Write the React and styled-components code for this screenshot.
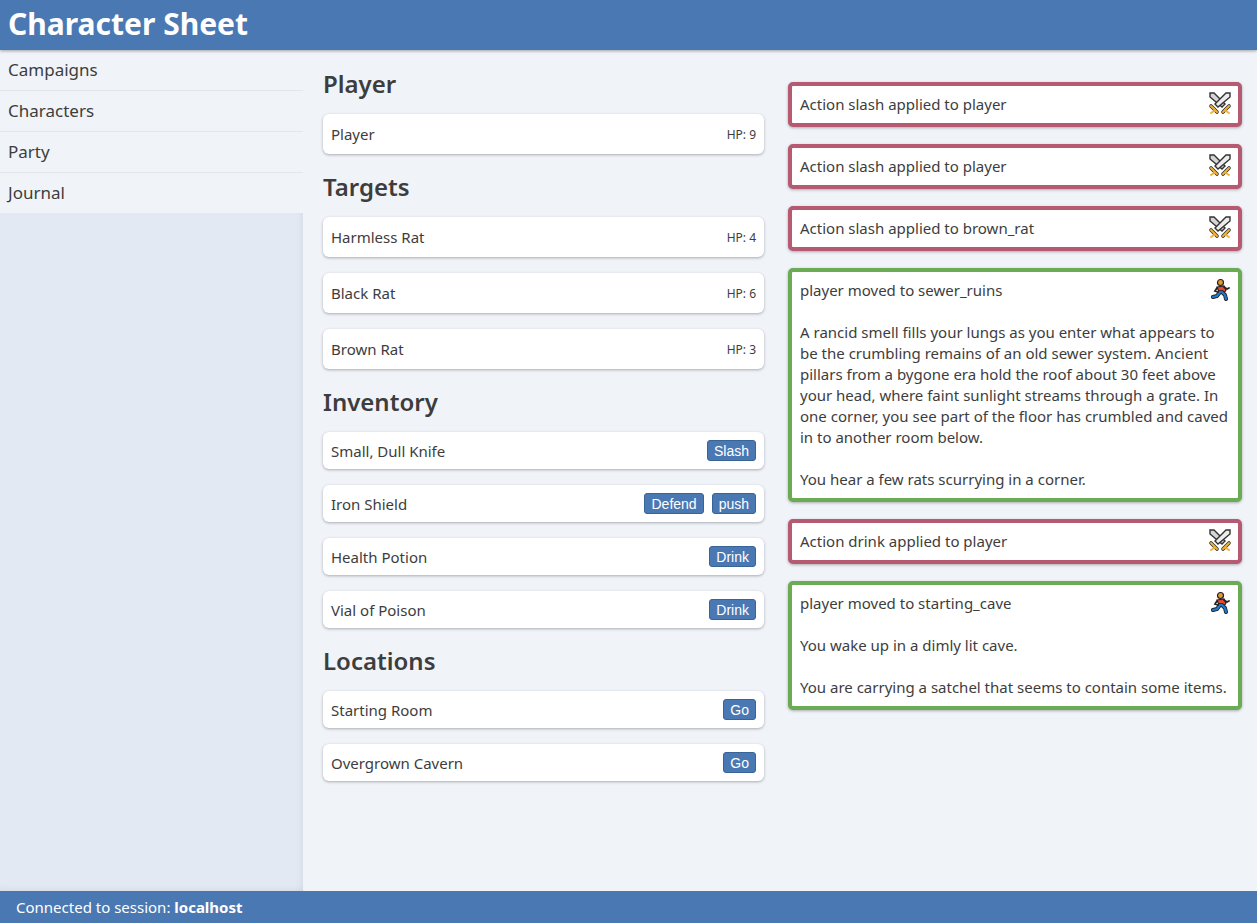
import React from 'react'
import styled, { createGlobalStyle } from 'styled-components'

const colors = {
  blue: '#4a78b3',
  page: '#f0f4f9',
  side: '#e2e9f3',
  text: '#3d3d3d',
  action: '#b55a70',
  move: '#6aab54'
}

const GlobalStyle = createGlobalStyle`
  html, body { margin: 0; padding: 0; height: 100%; }
  #root { height: 100%; }
  body {
    font-family: "Noto Sans", "Open Sans", sans-serif;
    color: ${colors.text};
    background: ${colors.page};
  }
`

const Page = styled.div`
  display: grid;
  grid-template-rows: 50px 1fr 32px;
  height: 923px;
  overflow: hidden;
`

const Header = styled.header`
  background: ${colors.blue};
  color: #fff;
  font-size: 30px;
  font-weight: 700;
  line-height: 48px;
  padding-left: 8px;
  box-shadow: 0 1px 3px rgba(0, 0, 0, 0.35);
  z-index: 2;
`

const Body = styled.div`
  display: grid;
  grid-template-columns: 303px 1fr;
  min-height: 0;
`

const Sidebar = styled.nav`
  background: ${colors.side};
  box-shadow: inset -8px 0 8px -8px rgba(0, 0, 0, 0.08), inset 0 -8px 8px -8px rgba(0, 0, 0, 0.08);
`

const NavItem = styled.div`
  height: 40px;
  line-height: 40px;
  padding-left: 8px;
  font-size: 17px;
  background: ${colors.page};
  border-bottom: 1px solid #e2e7ef;

  &:last-child { border-bottom: 0; }
`

const Main = styled.main`
  display: grid;
  grid-template-columns: 441px 454px;
  column-gap: 24px;
  padding: 0 15px 0 20px;
  align-items: start;
`

const Column = styled.section`
  padding-top: 17px;
`

const Heading = styled.h2`
  margin: 0 0 14px;
  font-size: 24px;
  font-weight: 600;
  line-height: 33px;
`

const Card = styled.div`
  display: flex;
  align-items: center;
  justify-content: space-between;
  height: ${p => (p.$tall ? 40 : 37)}px;
  margin-bottom: 16px;
  padding: 0 8px;
  box-sizing: border-box;
  background: #fff;
  border-radius: 6px;
  box-shadow: 0 1px 3px rgba(0, 0, 0, 0.3);
  font-size: 15px;
`

const Hp = styled.span`
  font-size: 12px;
`

const Buttons = styled.div`
  display: flex;
  gap: 8px;
`

const ActionButton = styled.button`
  height: 21px;
  padding: 0 6px;
  background: ${colors.blue};
  border: 1px solid #3a6396;
  border-radius: 3px;
  color: #fff;
  font-family: "Liberation Sans", Arial, sans-serif;
  font-size: 14px;
  font-weight: 500;
`

const Feed = styled.section`
  padding-top: 32px;
`

const LogEntry = styled.div`
  position: relative;
  margin-bottom: 17px;
  padding: 8px;
  background: #fff;
  border: 4px solid ${p => (p.$kind === 'move' ? colors.move : colors.action)};
  border-radius: 5px;
  box-shadow: 0 1px 3px rgba(0, 0, 0, 0.3);
  font-size: 15px;
  line-height: 21px;
`

const LogText = styled.p`
  margin: 0;
  white-space: pre-line;
`

const LogIcon = styled.svg`
  position: absolute;
  top: 5px;
  right: 6px;
`

const Footer = styled.footer`
  background: ${colors.blue};
  color: #fff;
  font-size: 15px;
  line-height: 32px;
  padding-left: 16px;
  z-index: 2;

  b { font-weight: 700; }
`

const SwordsIcon = () => (
  <LogIcon width="24" height="24" viewBox="0 0 24 24">
    <path d="M2 2h4l11 11-3 3L2 6z" fill="#d5d5d5" stroke="#333" strokeWidth="1.4" />
    <path d="M22 2h-4L7 13l3 3L22 6z" fill="#ececec" stroke="#333" strokeWidth="1.4" />
    <path d="M3 15l6 6M21 15l-6 6" stroke="#333" strokeWidth="3.6" strokeLinecap="round" />
    <path d="M3 15l6 6M21 15l-6 6M6 20l-3 2M18 20l3 2" stroke="#f2b233" strokeWidth="2" strokeLinecap="round" />
  </LogIcon>
)

const RunnerIcon = () => (
  <LogIcon width="24" height="24" viewBox="0 0 24 24">
    <path d="M9 10l7-1 2 4-2 3-5-1z" fill="#e8492e" stroke="#222" strokeWidth="1.2" />
    <circle cx="12.5" cy="5.5" r="3" fill="#e8972e" stroke="#222" strokeWidth="1.2" />
    <path d="M12 15l-3 4-4 1M14 15l3 3 1 4" fill="none" stroke="#222" strokeWidth="4" strokeLinecap="round" />
    <path d="M12 15l-3 4-4 1M14 15l3 3 1 4" fill="none" stroke="#1f7ad0" strokeWidth="2.2" strokeLinecap="round" />
    <path d="M9 11l-2 3 3 1M16 10l3 2 2-1" fill="none" stroke="#222" strokeWidth="1.8" strokeLinecap="round" />
  </LogIcon>
)

const NAV = ['Campaigns', 'Characters', 'Party', 'Journal']

const TARGETS = [
  { name: 'Harmless Rat', hp: 4 },
  { name: 'Black Rat', hp: 6 },
  { name: 'Brown Rat', hp: 3 }
]

const INVENTORY = [
  { name: 'Small, Dull Knife', actions: ['Slash'] },
  { name: 'Iron Shield', actions: ['Defend', 'push'] },
  { name: 'Health Potion', actions: ['Drink'] },
  { name: 'Vial of Poison', actions: ['Drink'] }
]

const LOCATIONS = ['Starting Room', 'Overgrown Cavern']

const LOG = [
  { kind: 'action', text: 'Action slash applied to player' },
  { kind: 'action', text: 'Action slash applied to player' },
  { kind: 'action', text: 'Action slash applied to brown_rat' },
  {
    kind: 'move',
    text: `player moved to sewer_ruins

A rancid smell fills your lungs as you enter what appears to be the crumbling remains of an old sewer system. Ancient pillars from a bygone era hold the roof about 30 feet above your head, where faint sunlight streams through a grate. In one corner, you see part of the floor has crumbled and caved in to another room below.

You hear a few rats scurrying in a corner.`
  },
  { kind: 'action', text: 'Action drink applied to player' },
  {
    kind: 'move',
    text: `player moved to starting_cave

You wake up in a dimly lit cave.

You are carrying a satchel that seems to contain some items.`
  }
]

const App = () => {
  return (
    <Page>
      <GlobalStyle />
      <Header>Character Sheet</Header>
      <Body>
        <Sidebar>
          {NAV.map(item => <NavItem key={item}>{item}</NavItem>)}
        </Sidebar>
        <Main>
          <Column>
            <Heading>Player</Heading>
            <Card $tall>Player<Hp>HP: 9</Hp></Card>
            <Heading>Targets</Heading>
            {TARGETS.map(t => (
              <Card $tall key={t.name}>{t.name}<Hp>HP: {t.hp}</Hp></Card>
            ))}
            <Heading>Inventory</Heading>
            {INVENTORY.map(item => (
              <Card key={item.name}>
                {item.name}
                <Buttons>
                  {item.actions.map(a => <ActionButton key={a}>{a}</ActionButton>)}
                </Buttons>
              </Card>
            ))}
            <Heading>Locations</Heading>
            {LOCATIONS.map(loc => (
              <Card key={loc}>{loc}<ActionButton>Go</ActionButton></Card>
            ))}
          </Column>
          <Feed>
            {LOG.map((entry, i) => (
              <LogEntry key={i} $kind={entry.kind}>
                <LogText>{entry.text}</LogText>
                {entry.kind === 'move' ? <RunnerIcon /> : <SwordsIcon />}
              </LogEntry>
            ))}
          </Feed>
        </Main>
      </Body>
      <Footer>Connected to session: <b>localhost</b></Footer>
    </Page>
  )
}

export default App
